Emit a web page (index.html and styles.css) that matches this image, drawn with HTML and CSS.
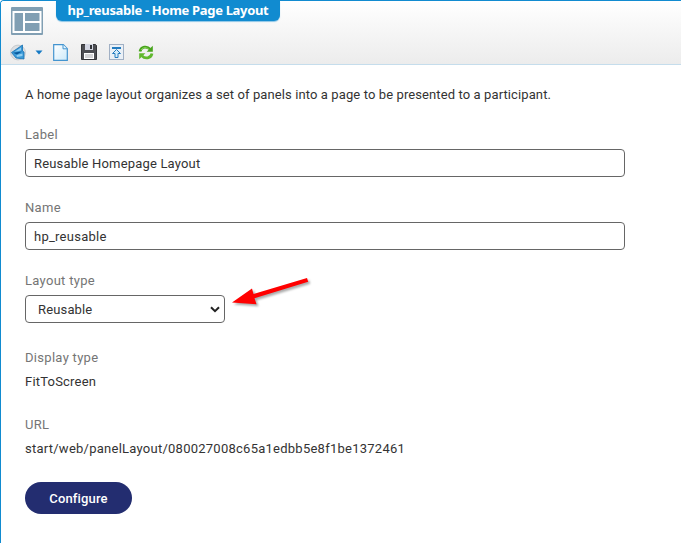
FILE: index.html
```html
<!DOCTYPE html>
<html lang="en">
<head>
<meta charset="utf-8">
<title>hp_reusable - Home Page Layout</title>
<link rel="stylesheet" href="styles.css">
</head>
<body>
<div class="window">
  <header class="header">
    <div class="heading">
      <svg class="page-icon" width="32" height="28" viewBox="0 0 32 28">
        <rect width="32" height="28" rx="1" fill="#819fb3"/>
        <path d="M2.500 5h27v20h-27zM13 5v20M13 15H29.500" fill="none" stroke="#fff" stroke-width="2"/>
      </svg>
      <h1 class="title">hp_reusable - Home Page Layout</h1>
    </div>
    <div class="toolbar">
      <svg class="tool-shape" width="16" height="18" viewBox="0 0 16 18">
        <circle cx="8" cy="9.500" r="7.400" fill="#dcdfe2" stroke="#c5cace"/>
        <path d="M1.500 9.500 12.500 2v6l1.500 1v7L6 15z" fill="#3a9ad8" stroke="#1670b1" stroke-width=".8"/>
        <path d="M4.500 8.800 11 4.500v3zM6.500 12l6-1.500V13L7 14z" fill="#8fcdf1"/>
        <path d="m3 9.800 9-1.300-5 3z" fill="#07579a"/>
      </svg>
      <svg class="tool-caret" width="8" height="5" viewBox="0 0 8 5"><path d="M.5.5h7L4 4.500z" fill="#1479c4"/></svg>
      <svg class="tool-new" width="15" height="17" viewBox="0 0 15 17">
        <defs><linearGradient id="paper" x2="1" y2="1"><stop stop-color="#fff"/><stop offset="1" stop-color="#cceafa"/></linearGradient></defs>
        <path d="M.7.7h9.600l4 4v11.600H.7z" fill="url(#paper)" stroke="#4294d0" stroke-width="1.200"/>
        <path d="M10 .8v4h4.200" fill="#e6f5fd" stroke="#4294d0"/>
      </svg>
      <svg class="tool-save" width="16" height="16" viewBox="0 0 16 16">
        <path d="M.5.5h14l1 1v14H.5z" fill="#4d4e52" stroke="#343538"/>
        <path d="M4 0h8v6H4z" fill="#d4d7e3"/><path d="M9 1h2v4H9z" fill="#333438"/>
        <path d="M3 9h10v6H3z" fill="#fff"/><path d="M4 11h8M4 13h8" stroke="#a8a8ab"/>
      </svg>
      <svg class="tool-upload" width="15" height="16" viewBox="0 0 15 16">
        <rect x=".5" y=".5" width="14" height="15" fill="#eaf0f6" stroke="#a1b0c4"/>
        <path d="M3 4h9" stroke="#237bbf" stroke-width="2"/>
        <path d="m7.500 5.500 4 4H9v4H6v-4H3.500z" fill="#d6edfb" stroke="#237bbf"/>
      </svg>
      <svg class="tool-refresh" width="16" height="15" viewBox="0 0 16 15">
        <path d="M2 6.500C3 1.500 9 .7 12 4.200" fill="none" stroke="#48a41d" stroke-width="2.800"/>
        <path d="M14.800.8v6H8.600z" fill="#48a41d"/>
        <path d="M14 8.500c-1 5-7 5.800-10 2.300" fill="none" stroke="#60b82d" stroke-width="2.800"/>
        <path d="M1.200 14.200v-6h6.200z" fill="#60b82d"/>
        <path d="M3 5c2-3 6-3 8-.5" fill="none" stroke="#8bd65b"/>
      </svg>
    </div>
  </header>
  <main class="content">
    <p class="intro"><span>A home page layout organizes a set of panels into a page to be presented to a participant.</span></p>
    <label class="label" for="label">Label</label>
    <input class="input input-label" id="label" value="Reusable Homepage Layout">
    <label class="label" for="name">Name</label>
    <input class="input input-name" id="name" value="hp_reusable">
    <div class="label">Layout type</div>
    <div class="select-row">
      <div class="select"><span>Reusable</span>
        <svg width="10" height="7" viewBox="0 0 10 7"><path d="m1 1.200 4 4 4-4" fill="none" stroke="#222" stroke-width="2"/></svg>
      </div>
      <svg class="arrow" width="90" height="40" viewBox="0 0 90 40">
        <path d="m1 24.500 20-14 1.500 5.500L76 0l1.200 3.800-53.700 16.500 2 6z" fill="#f00"/>
      </svg>
    </div>
    <div class="label label-display">Display type</div>
    <div class="value"><span>FitToScreen</span></div>
    <div class="label label-url">URL</div>
    <div class="value value-url"><span>start/web/panelLayout/080027008c65a1edbb5e8f1be1372461</span></div>
    <button class="configure">Configure</button>
  </main>
</div>
</body>
</html>
```
FILE: styles.css
```css
* { box-sizing: border-box; }
body { margin: 0; background: #fff; font-family: Roboto, "Liberation Sans", sans-serif; font-size: 13px; color: #333; }
.window { height: 543px; border-top: 1px solid #118bd0; border-left: 1px solid #118bd0; border-top-left-radius: 4px; overflow: hidden; }
.header { height: 64px; background: linear-gradient(#fff, #ececec); border-bottom: 1px solid #c5ddec; }
.heading { height: 37px; display: flex; align-items: flex-start; }
.page-icon { margin: 6px 0 0 10px; }
.title { margin: 0 0 0 13px; width: 224px; height: 20px; border-radius: 0 0 6px 6px; background: #118bd0; box-shadow: 0 1px 1px #8bc5e6; color: #fff; font: bold 13px/18px "Noto Sans", sans-serif; letter-spacing: -.33px; text-align: center; white-space: nowrap; }
.toolbar { height: 27px; display: flex; align-items: center; padding: 1px 0 0 9px; }
.tool-caret { margin-left: 9px; }
.tool-new { margin-left: 10px; }
.tool-save { margin-left: 13px; }
.tool-upload { margin-left: 12px; }
.tool-refresh { margin-left: 14px; }
.content { padding: 20px 24px; }
.intro { margin: 0 0 20px; height: 20px; line-height: 20px; white-space: nowrap; letter-spacing: .105px; }
.label { display: block; height: 20px; line-height: 20px; margin-bottom: 4px; color: #757575; letter-spacing: .3px; }
.input { display: block; width: 600px; height: 28px; border: 1px solid #666; border-radius: 4px; padding: 0 8px; font: inherit; color: #333; letter-spacing: .18px; margin-bottom: 21px; outline: 0; }
.input-name { letter-spacing: .25px; }
.select-row { display: flex; height: 28px; margin-bottom: 25px; }
.select { width: 200px; height: 28px; border: 1px solid #666; border-radius: 4px; display: flex; align-items: center; justify-content: space-between; padding: 0 4px 0 12px; letter-spacing: .15px; }
.arrow { margin: -17px 0 0 6px; filter: drop-shadow(2px 2px 1px #aaa); }
.value { height: 20px; line-height: 20px; margin-bottom: 23px; letter-spacing: .2px; }
.value-url { margin-bottom: 23px; letter-spacing: .25px; }
.configure { display: block; width: 107px; height: 32px; border: 0; border-radius: 16px; background: #232d70; color: #fff; font: 500 13px Roboto, sans-serif; letter-spacing: .15px; padding: 0; }
```
